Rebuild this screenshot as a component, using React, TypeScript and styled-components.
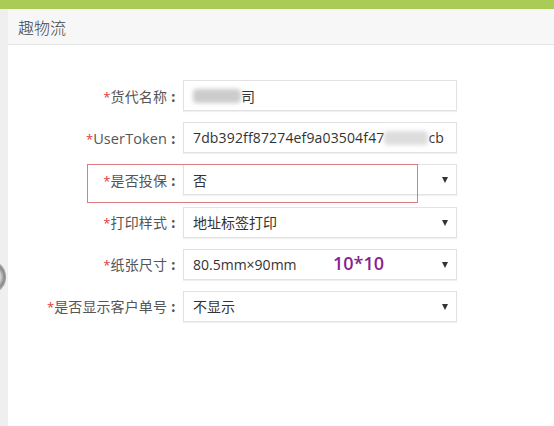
import React from "react";
import styled, { createGlobalStyle } from "styled-components";

const Global = createGlobalStyle`
  html, body { margin: 0; padding: 0; background: #fff; }
  body {
    font-family: "Open Sans", "Noto Sans CJK SC", sans-serif;
    width: 554px; height: 426px; overflow: hidden;
  }
`;

const Page = styled.div`
  position: relative;
  width: 554px;
  height: 426px;
  display: flex;
  flex-direction: column;
  overflow: hidden;
`;

const TopBar = styled.div`
  height: 9px;
  background: #abcb57;
  flex: none;
`;

const Body = styled.div`
  flex: 1;
  display: flex;
`;

const SideStrip = styled.div`
  width: 8px;
  background: #efefef;
  flex: none;
`;

const Panel = styled.div`
  flex: 1;
  display: flex;
  flex-direction: column;
  background: #fff;
`;

const Header = styled.div`
  height: 36px;
  background: #f7f7f7;
  border-bottom: 1px solid #e4e4e4;
  display: flex;
  align-items: center;
  padding-left: 10px;
  font-family: "Noto Sans CJK SC", sans-serif;
  font-size: 16px;
  font-weight: 300;
  color: #444;
  box-sizing: border-box;
`;

const Form = styled.div`
  display: flex;
  flex-direction: column;
  gap: 11.2px;
  padding-top: 35px;
`;

const Row = styled.div`
  position: relative;
  display: grid;
  grid-template-columns: 175px 274px;
  height: 31px;
  align-items: center;
`;

const Label = styled.div`
  text-align: right;
  font-family: "Noto Sans CJK SC", sans-serif;
  font-size: 14px;
  color: #555;
  white-space: nowrap;
  letter-spacing: 0.1px;
`;

const Colon = styled.span`
  display: inline-block;
  width: 16px;
  text-align: left;
  padding-left: 4px;
  box-sizing: border-box;
  font-weight: 700;
`;

const Latin = styled.span`
  font-family: "Open Sans", sans-serif;
  font-size: 14.5px;
`;

const Star = styled.span`
  color: #e03a3a;
  font-family: "Open Sans", sans-serif;
  font-size: 13px;
`;

const Field = styled.div`
  position: relative;
  height: 31px;
  box-sizing: border-box;
  border: 1px solid #e2e2e2;
  box-shadow: 0 1px 1px rgba(0, 0, 0, 0.06);
  background: #fff;
  display: flex;
  align-items: center;
  padding-left: 9px;
  font-size: 14px;
  color: #333;
  font-family: "Open Sans", "Noto Sans CJK SC", sans-serif;
  white-space: nowrap;
`;

const Token = styled.span`
  letter-spacing: 0.15px;
`;

const Blur = styled.span<{ $w: number; $tone: string }>`
  display: inline-block;
  width: ${(p) => p.$w}px;
  height: 14px;
  background: ${(p) => p.$tone};
  filter: blur(2px);
  border-radius: 4px;
  vertical-align: middle;
`;

const Arrow = styled.span`
  position: absolute;
  right: 8px;
  top: 12px;
  width: 0;
  height: 0;
  border-left: 3.5px solid transparent;
  border-right: 3.5px solid transparent;
  border-top: 6px solid #333;
`;

const Note = styled.span`
  position: absolute;
  left: 149px;
  top: 1px;
  color: #8a1f8f;
  font-family: "Open Sans", sans-serif;
  font-weight: 600;
  font-size: 18px;
`;

const Highlight = styled.div`
  position: absolute;
  left: 79px;
  top: 0;
  width: 331px;
  height: 39px;
  box-sizing: border-box;
  border: 1.5px solid #e07a82;
  pointer-events: none;
`;

const SideKnob = styled.div`
  position: absolute;
  left: -17px;
  top: 262px;
  width: 23px;
  height: 30px;
  border-radius: 50%;
  background: radial-gradient(circle at 40% 50%, #e8e8e8 0 35%, #8a8a8a 60%, #d8d8d8 85%);
`;

export default function App() {
  return (
    <>
      <Global />
      <Page>
        <TopBar />
        <Body>
          <SideStrip />
          <Panel>
            <Header>趣物流</Header>
            <Form>
              <Row>
                <Label>
                  <Star>*</Star>货代名称<Colon>:</Colon>
                </Label>
                <Field>
                  <Blur $w={48} $tone="#cccccc" />
                  司
                </Field>
              </Row>
              <Row>
                <Label>
                  <Star>*</Star>
                  <Latin>UserToken</Latin>
                  <Colon>:</Colon>
                </Label>
                <Field>
                  <Token>7db392ff87274ef9a03504f47</Token>
                  <Blur $w={44} $tone="#dddddd" />
                  cb
                </Field>
              </Row>
              <Row>
                <Label>
                  <Star>*</Star>是否投保<Colon>:</Colon>
                </Label>
                <Field>
                  否<Arrow />
                </Field>
                <Highlight />
              </Row>
              <Row>
                <Label>
                  <Star>*</Star>打印样式<Colon>:</Colon>
                </Label>
                <Field>
                  地址标签打印
                  <Arrow />
                </Field>
              </Row>
              <Row>
                <Label>
                  <Star>*</Star>纸张尺寸<Colon>:</Colon>
                </Label>
                <Field>
                  80.5mm×90mm
                  <Note>10*10</Note>
                  <Arrow />
                </Field>
              </Row>
              <Row>
                <Label>
                  <Star>*</Star>是否显示客户单号<Colon>:</Colon>
                </Label>
                <Field>
                  不显示
                  <Arrow />
                </Field>
              </Row>
            </Form>
          </Panel>
        </Body>
        <SideKnob />
      </Page>
    </>
  );
}
